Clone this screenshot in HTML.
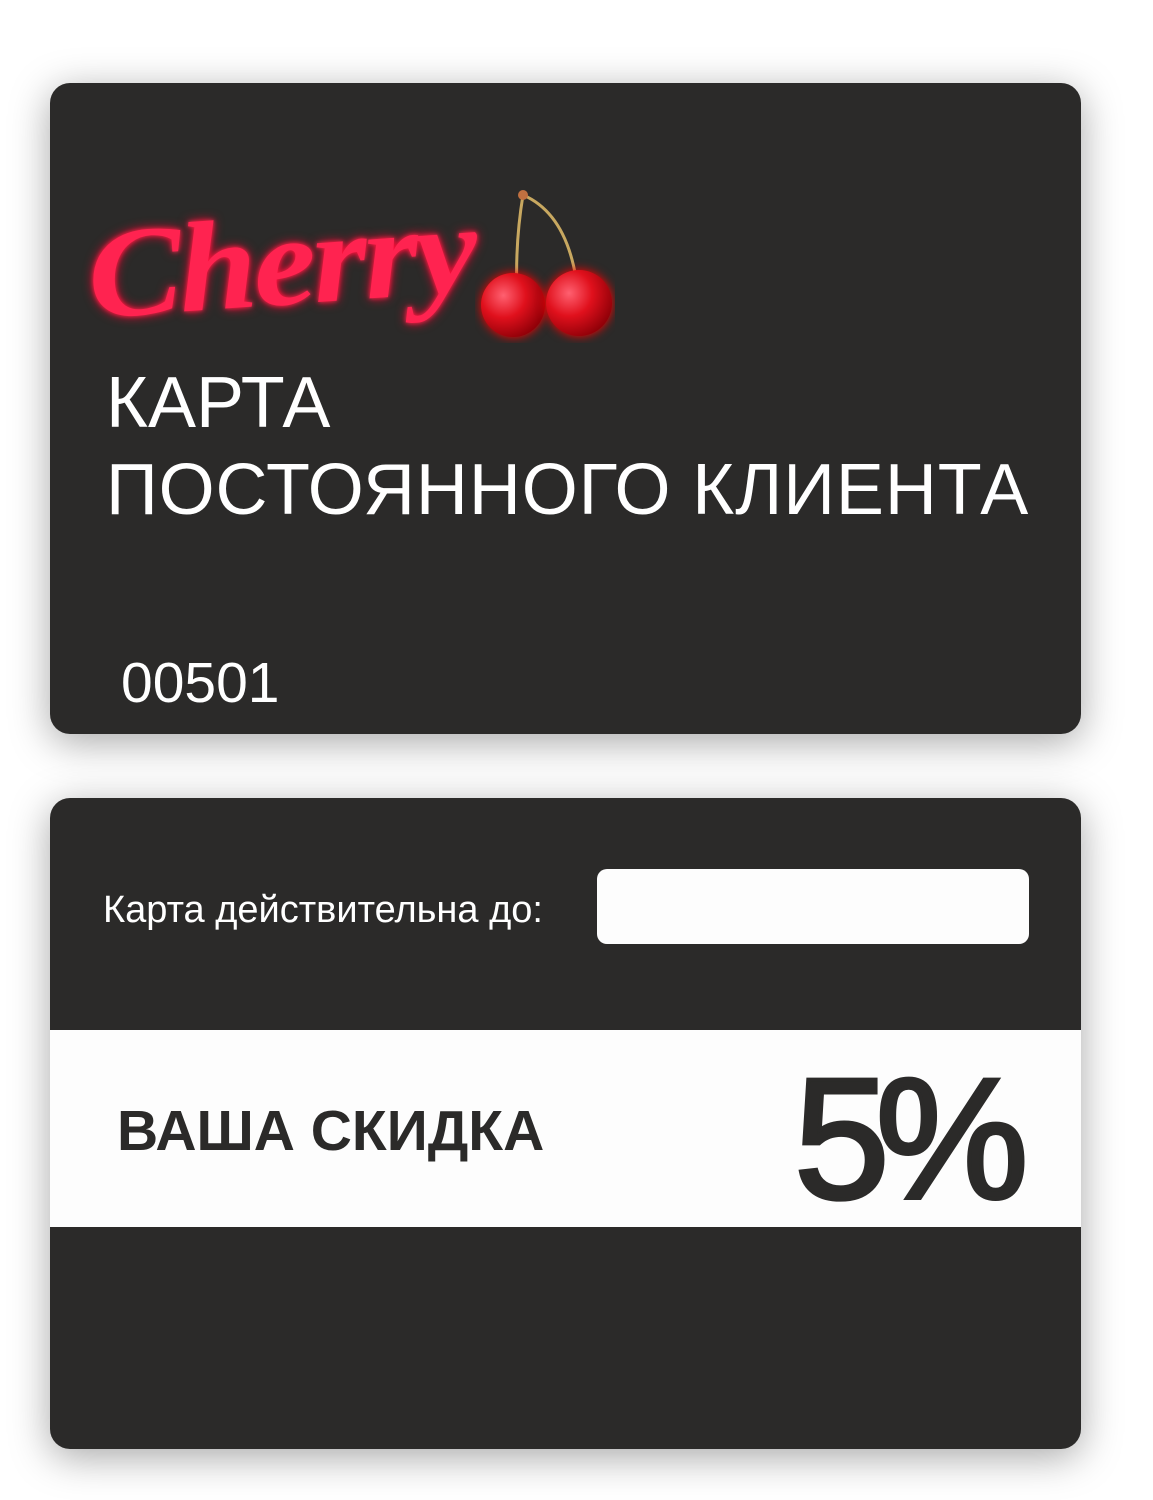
<!DOCTYPE html>
<html><head><meta charset="utf-8"><style>
body{margin:0;width:1153px;height:1500px;background:#fff;position:relative;overflow:hidden;font-family:"Liberation Sans",sans-serif}
.card{position:absolute;left:50px;width:1031px;height:651px;background:#2b2a29;border-radius:20px;box-shadow:0 8px 40px rgba(0,0,0,.35);overflow:hidden}
.t{position:absolute;color:#fff;white-space:nowrap;line-height:1}
</style></head><body>
<div class="card" style="top:83px">
  <div class="t" style="left:38px;top:128px;font-family:'Liberation Serif',serif;font-style:italic;font-weight:bold;font-size:128px;color:#ff2350;text-shadow:0 0 10px #ff0030,0 0 4px #ff4060;letter-spacing:-3px;transform:rotate(-4deg) scaleX(1.1);transform-origin:left center">Cherry</div>
  <svg style="position:absolute;left:425px;top:100px" width="140" height="160" viewBox="0 0 140 160">
    <defs><radialGradient id="g" cx="0.35" cy="0.35" r="0.7"><stop offset="0" stop-color="#ff6070"/><stop offset=".5" stop-color="#e0101c"/><stop offset="1" stop-color="#900008"/></radialGradient></defs>
    <path d="M48 12 Q40 60 42 110" stroke="#c8a860" stroke-width="3" fill="none"/>
    <path d="M48 12 Q90 30 101 95" stroke="#c8a860" stroke-width="3" fill="none"/>
    <circle cx="48" cy="12" r="5" fill="#c07040"/>
    <circle cx="38" cy="122" r="32" fill="url(#g)" style="filter:drop-shadow(0 0 5px #f00)"/>
    <circle cx="104" cy="120" r="33" fill="url(#g)" style="filter:drop-shadow(0 0 5px #f00)"/>
  </svg>
  <div class="t" style="left:56px;top:284px;font-size:72px">КАРТА</div>
  <div class="t" style="left:56px;top:371px;font-size:72px;letter-spacing:0.9px">ПОСТОЯННОГО КЛИЕНТА</div>
  <div class="t" style="left:71px;top:572px;font-size:57px">00501</div>
</div>
<div class="card" style="top:798px">
  <div class="t" style="left:53px;top:93px;font-size:38px">Карта действительна до:</div>
  <div style="position:absolute;left:547px;top:71px;width:432px;height:75px;background:#fdfdfd;border-radius:10px"></div>
  <div style="position:absolute;left:0;top:232px;width:1031px;height:197px;background:#fdfdfd"></div>
  <div class="t" style="left:67px;top:305px;font-size:57px;font-weight:bold;color:#2b2a29">ВАША СКИДКА</div>
  <div class="t" style="left:744px;top:255px;font-size:172px;color:#2b2a29;letter-spacing:-14px;-webkit-text-stroke:4px #2b2a29">5%</div>
</div>
</body></html>
